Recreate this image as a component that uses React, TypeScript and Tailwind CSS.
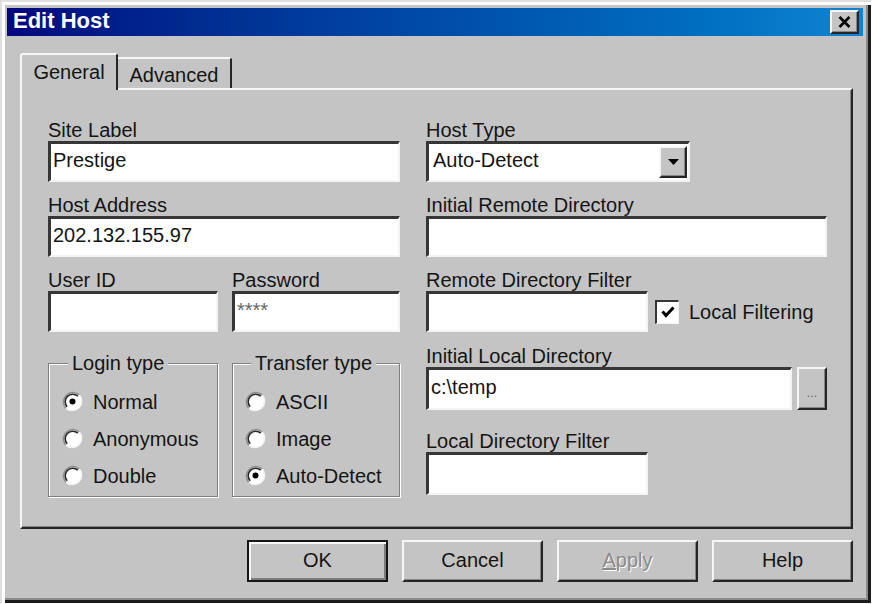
import React from "react";

const raised =
  "border-2 border-t-[#f6f6f6] border-l-[#f6f6f6] border-r-[#262626] border-b-[#262626] shadow-[inset_-1px_-1px_0_#858585]";
const sunken =
  "border-t-[3px] border-l-[3px] border-r-2 border-b-2 border-t-[#363636] border-l-[#363636] border-r-[#f4f4f4] border-b-[#f4f4f4] bg-white";

function Label({ children, className = "" }: { children: React.ReactNode; className?: string }) {
  return <div className={`h-[22px] leading-[22px] whitespace-nowrap ${className}`}>{children}</div>;
}

function Field({ className = "", children }: { className?: string; children?: React.ReactNode }) {
  return (
    <div className={`${sunken} flex items-center pl-[2px] pb-[4px] leading-[23px] overflow-hidden whitespace-nowrap ${className}`}>
      {children}
    </div>
  );
}

function Radio({ checked }: { checked?: boolean }) {
  return (
    <svg width="21" height="21" viewBox="0 0 21 21" className="shrink-0">
      <circle cx="10.5" cy="10.5" r="9.5" fill="#fff" />
      <path d="M3.8 17.2 A9.5 9.5 0 0 0 17.2 3.8" fill="none" stroke="#f4f4f4" strokeWidth="1.6" />
      <path d="M17.2 3.8 A9.5 9.5 0 0 0 3.8 17.2" fill="none" stroke="#8a8a8a" strokeWidth="1.6" />
      <path d="M15.8 5.2 A7.5 7.5 0 0 0 5.2 15.8" fill="none" stroke="#262626" strokeWidth="1.6" />
      {checked && <circle cx="10.5" cy="10.5" r="3" fill="#000" />}
    </svg>
  );
}

function RadioRow({ label, checked }: { label: string; checked?: boolean }) {
  return (
    <div className="h-[37px] flex items-center gap-[10px]">
      <Radio checked={checked} />
      <span className="leading-[22px] whitespace-nowrap">{label}</span>
    </div>
  );
}

function Btn({ children, def, className = "" }: { children: React.ReactNode; def?: boolean; className?: string }) {
  const frame = def
    ? "border-2 border-[#161616] shadow-[inset_2px_2px_0_#f6f6f6,inset_-2px_-2px_0_#7c7c7c]"
    : raised;
  return (
    <div className={`w-[141px] h-[42px] ${frame} flex items-center justify-center pb-[2px] ${className}`}>
      {children}
    </div>
  );
}

export default function App() {
  return (
    <div className="w-[871px] h-[603px] bg-[#c4c4c4] flex flex-col pl-[7px] pr-[8px] pt-[8px] font-['Liberation_Sans',Arial,sans-serif] text-[20px] text-[#141414] shadow-[inset_2px_2px_0_#dedede,inset_5px_5px_0_#ffffff,inset_-3px_-3px_0_#1c1c1c,inset_-5px_-5px_0_#8a8a8a]">
      {/* Title bar */}
      <div className="h-[28px] shrink-0 flex items-center justify-between bg-gradient-to-r from-[#06067e] to-[#1084d0] pl-[6px] pr-[4px]">
        <span className="text-white font-bold text-[22px] leading-none pb-[3px]">Edit Host</span>
        <div className={`w-[29px] h-[24px] ${raised} bg-[#c4c4c4] flex items-center justify-center`}>
          <svg width="13" height="12" viewBox="0 0 13 12">
            <path d="M1.5 1 L11.5 11 M11.5 1 L1.5 11" stroke="#000" strokeWidth="2.6" />
          </svg>
        </div>
      </div>

      <div className="pl-[13px] pr-[10px] pt-[17px] flex flex-col">
        {/* Tabs */}
        <div className="flex items-start h-[35px]">
          <div className="relative z-10 w-[98px] h-[37px] bg-[#c4c4c4] border-t-2 border-l-2 border-r-2 border-t-[#f6f6f6] border-l-[#f6f6f6] border-r-[#262626] rounded-t-[3px] flex justify-center pt-[6px] leading-[22px]">
            General
          </div>
          <div className="mt-[4px] w-[114px] h-[31px] border-t-2 border-r-2 border-t-[#f6f6f6] border-r-[#262626] rounded-tr-[3px] flex justify-center pt-[5px] leading-[22px]">
            Advanced
          </div>
        </div>

        {/* Panel */}
        <div className="w-[833px] h-[441px] border-2 border-t-[#f6f6f6] border-l-[#f6f6f6] border-r-[#242424] border-b-[#242424] shadow-[inset_-1px_-1px_0_#858585] pt-[29px] pl-[26px] flex gap-[26px]">
          {/* Left column */}
          <div className="w-[352px] flex flex-col">
            <Label>Site Label</Label>
            <Field className="w-[352px] h-[41px]">Prestige</Field>
            <Label className="mt-[12px]">Host Address</Label>
            <Field className="w-[352px] h-[41px]">202.132.155.97</Field>
            <div className="mt-[12px] flex gap-[14px]">
              <div className="w-[170px] flex flex-col">
                <Label>User ID</Label>
                <Field className="h-[41px]" />
              </div>
              <div className="w-[168px] flex flex-col">
                <Label>Password</Label>
                <Field className="h-[41px]">
                  <span className="text-[#666]">****</span>
                </Field>
              </div>
            </div>
            <div className="mt-[31px] flex gap-[14px]">
              <div className="relative w-[170px] h-[134px] border border-[#808080] shadow-[1px_1px_0_#fff,inset_1px_1px_0_#fff] flex flex-col pt-[19px] pl-[13px]">
                <span className="absolute left-[19px] -top-[12px] px-[4px] bg-[#c4c4c4] leading-[22px]">Login type</span>
                <RadioRow label="Normal" checked />
                <RadioRow label="Anonymous" />
                <RadioRow label="Double" />
              </div>
              <div className="relative w-[168px] h-[134px] border border-[#808080] shadow-[1px_1px_0_#fff,inset_1px_1px_0_#fff] flex flex-col pt-[19px] pl-[12px]">
                <span className="absolute left-[18px] -top-[12px] px-[4px] bg-[#c4c4c4] leading-[22px]">Transfer type</span>
                <RadioRow label="ASCII" />
                <RadioRow label="Image" />
                <RadioRow label="Auto-Detect" checked />
              </div>
            </div>
          </div>

          {/* Right column */}
          <div className="w-[401px] flex flex-col">
            <Label>Host Type</Label>
            <div className={`${sunken} w-[264px] h-[41px] flex items-center`}>
              <span className="flex-1 pl-[4px] pb-[4px] leading-[23px]">Auto-Detect</span>
              <div className={`w-[28px] h-[32px] mr-[1px] ${raised} bg-[#c4c4c4] flex items-center justify-center`}>
                <svg width="11" height="6" viewBox="0 0 11 6">
                  <path d="M0 0 H11 L5.5 6 Z" fill="#000" />
                </svg>
              </div>
            </div>
            <Label className="mt-[12px]">Initial Remote Directory</Label>
            <Field className="w-[401px] h-[41px]" />
            <Label className="mt-[12px]">Remote Directory Filter</Label>
            <div className="flex items-center">
              <Field className="w-[222px] h-[41px]" />
              <div className="ml-[7px] w-[24px] h-[24px] border-t-2 border-l-2 border-r border-b border-t-[#363636] border-l-[#363636] border-r-[#f4f4f4] border-b-[#f4f4f4] bg-white flex items-center justify-center">
                <svg width="14" height="12" viewBox="0 0 14 12">
                  <path d="M1.5 5.5 L5 9.5 L12.5 1.5" fill="none" stroke="#000" strokeWidth="3" />
                </svg>
              </div>
              <span className="ml-[10px] leading-[22px] whitespace-nowrap">Local Filtering</span>
            </div>
            <Label className="mt-[13px]">Initial Local Directory</Label>
            <div className="flex gap-[5px]">
              <Field className="w-[366px] h-[43px]">{"c:\\temp"}</Field>
              <div className={`w-[30px] h-[43px] ${raised} flex items-center justify-center text-[13px] text-[#666] pt-[8px]`}>
                ...
              </div>
            </div>
            <Label className="mt-[20px]">Local Directory Filter</Label>
            <Field className="w-[222px] h-[43px]" />
          </div>
        </div>

        {/* Buttons */}
        <div className="mt-[11px] w-[833px] flex justify-end gap-[14px]">
          <Btn def>OK</Btn>
          <Btn>Cancel</Btn>
          <Btn>
            <span className="text-[#8a8a8a] [text-shadow:1px_1px_0_#fff]">
              <span className="underline">A</span>pply
            </span>
          </Btn>
          <Btn>Help</Btn>
        </div>
      </div>
    </div>
  );
}
